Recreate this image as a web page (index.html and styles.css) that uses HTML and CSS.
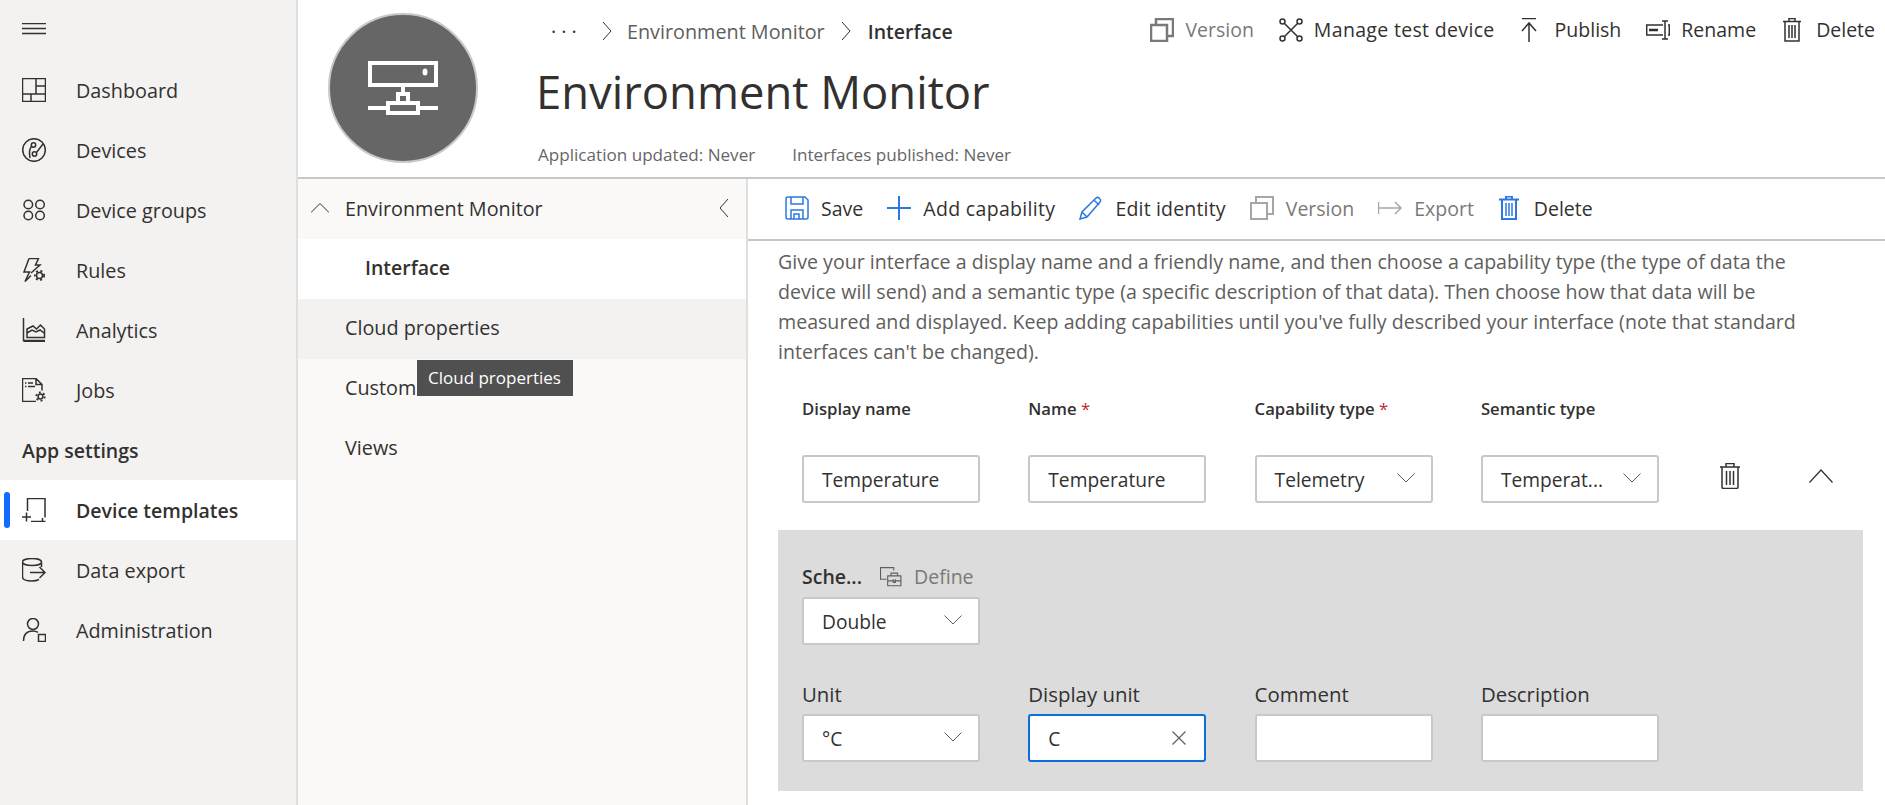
FILE: index.html
```html
<!DOCTYPE html>
<html lang="en">
<head>
  <meta charset="UTF-8">
  <title>Environment Monitor</title>
  <link rel="stylesheet" href="styles.css">
</head>
<body>
  <nav id="sidebar">
    <div class="burger">
      <svg width="24" height="12" viewBox="0 0 24 12"><path d="M0 .5h24M0 5.5h24M0 10.5h24"/></svg>
    </div>
    <a class="nav-item">
      <svg class="icon" viewBox="0 0 24 24"><path d="M.5.5h23v23H.5zM14 .5V16M.5 16h23M14 8h9.5M9 16v7.5"/></svg>
      Dashboard
    </a>
    <a class="nav-item">
      <svg class="icon" viewBox="0 0 24 24"><circle cx="12" cy="12" r="11.3"/><circle cx="11.5" cy="7" r="2.2"/><circle cx="12.5" cy="16" r="2.2"/><path d="M9.6 8.2C7.6 10.5 7 15 8 20M14.5 14.5L21 6"/></svg>
      Devices
    </a>
    <a class="nav-item">
      <svg class="icon" viewBox="0 0 24 24"><circle cx="6.3" cy="6.5" r="4.3"/><circle cx="18" cy="6.5" r="4.3"/><circle cx="6.3" cy="17.5" r="4.3"/><circle cx="18" cy="17.5" r="4.3"/></svg>
      Device groups
    </a>
    <a class="nav-item">
      <svg class="icon" viewBox="0 0 24 24"><path d="M7 .5h9.5l-3 6.5h4.5L9 15M7 .5L2 14h5.5L3 23.5l6-6"/><circle cx="17.5" cy="17.5" r="3"/><circle class="teeth" cx="17.5" cy="17.5" r="4.6"/></svg>
      Rules
    </a>
    <a class="nav-item">
      <svg class="icon" viewBox="0 0 24 24"><path d="M1.5 0v22.5H23M1.5 23.5H23M5 19.5V11l6-3 3.5 3 4-4 4 4v8.5zM5 15l5-3 4 2 4-2 4 3"/></svg>
      Analytics
    </a>
    <a class="nav-item">
      <svg class="icon" viewBox="0 0 24 24"><path d="M14 23.5H.5V.5H14l6 6v6M14 .5v6h6M3 5h1.5M3 8.5h1.5M6 5h5M6 8.5h7"/><circle cx="18.5" cy="18.5" r="2.4"/><circle class="teeth" cx="18.5" cy="18.5" r="4.2"/></svg>
      Jobs
    </a>
    <div class="nav-heading">App settings</div>
    <a class="nav-item nav-current">
      <svg class="icon" viewBox="0 0 24 24"><path d="M5.5 13V.5H23v19M0 19h9M4.5 14.5v9M9 23.5h14.5M20.5 20v3.5"/></svg>
      Device templates
    </a>
    <a class="nav-item">
      <svg class="icon" viewBox="0 0 24 24"><path d="M.5 4c0-2 4-3.5 9.5-3.5s9.5 1.5 9.5 3.5-4 3.5-9.5 3.5S.5 6 .5 4zM.5 4v15c0 3 4 4 9.5 4 3 0 5-.5 7-1.5M19.5 4v5M8 14.5h15M17.5 9l5.5 5.5-5.5 5.5"/></svg>
      Data export
    </a>
    <a class="nav-item">
      <svg class="icon" viewBox="0 0 24 24"><circle cx="11" cy="6" r="5.5"/><path d="M1.5 23c0-6 3-10 9.5-10 2 0 3.5.4 5 1.400"/><rect x="16.5" y="16.5" width="7" height="7"/></svg>
      Administration
    </a>
  </nav>

  <div id="main">
    <header id="header">
      <div class="avatar">
        <svg width="70" height="54" viewBox="0 0 70 54"><path d="M2 2h66v22H2zM35 24v9M30 33h10v9H30zM20 42h30v10H20zM0 47h20M50 47h20"/><ellipse cx="57" cy="11" rx="2.5" ry="3.5"/></svg>
      </div>
      <div class="head-text">
        <div class="crumbs">
          <span class="dots">···</span>
          <svg class="chev" viewBox="0 0 10 20"><path d="M1 1l8 9-8 9"/></svg>
          <span class="crumb">Environment Monitor</span>
          <svg class="chev" viewBox="0 0 10 20"><path d="M1 1l8 9-8 9"/></svg>
          <span class="crumb-now">Interface</span>
        </div>
        <h1>Environment Monitor</h1>
        <div class="meta">
          <span>Application updated: Never</span>
          <span>Interfaces published: Never</span>
        </div>
      </div>
      <div class="head-actions">
        <a class="act act-off">
          <svg class="icon" viewBox="0 0 24 24"><path class="thick" d="M1 7h16v16H1zM6 7V1h17v17h-6"/></svg>
          Version
        </a>
        <a class="act">
          <svg class="icon" viewBox="0 0 24 24"><circle cx="3.5" cy="3.5" r="2.5"/><circle cx="20.5" cy="3.5" r="2.5"/><circle cx="3.5" cy="20.5" r="2.5"/><circle cx="20.5" cy="20.5" r="2.5"/><path d="M5.500 5.500l13 13M18.500 5.500l-13 13"/></svg>
          <span class="stretch">Manage test device</span>
        </a>
        <a class="act act-publish">
          <svg class="icon icon-slim" viewBox="0 0 18 24"><path d="M2 .5h14M9 24V5M2 13l7-8 7 8"/></svg>
          Publish
        </a>
        <a class="act">
          <svg class="icon" viewBox="0 0 24 24"><path d="M17 7H.7v10H17M22 7h1.3v10H22M19 3v18M16 3h6M16 21h6"/><path class="thick" d="M3 12h9"/></svg>
          Rename
        </a>
        <a class="act act-last">
          <svg class="icon icon-slim" viewBox="0 0 18 24"><path d="M0 3.5h18M2 3.5V23h14V3.5M6 3.5V.5h6v3M6 7v13M9 7v13M12 7v13"/></svg>
          Delete
        </a>
      </div>
    </header>

    <div id="body">
      <aside id="tree">
        <div class="tree-top">
          <svg class="tree-up" viewBox="0 0 18 10"><path d="M0 9.5l9-9 9 9"/></svg>
          <span class="tree-name">Environment Monitor</span>
          <svg class="tree-back" viewBox="0 0 10 20"><path d="M9 1l-8 9 8 9"/></svg>
        </div>
        <div class="tree-row tree-sub">Interface</div>
        <div class="tree-row tree-hover">Cloud properties</div>
        <div class="tree-row">Customize</div>
        <div class="tree-row">Views</div>
        <div class="tooltip">Cloud properties</div>
      </aside>

      <section id="editor">
        <div class="toolbar">
          <a class="act">
            <svg class="icon blue" viewBox="0 0 24 24"><path d="M3 1h17l3 3v17a2 2 0 01-2 2H3a2 2 0 01-2-2V3a2 2 0 012-2zM6 1v7h12V1M6 23v-9h12v9M9 23v-5h5v5"/></svg>
            Save
          </a>
          <a class="act">
            <svg class="icon blue" viewBox="0 0 24 24"><path class="thick" d="M12 0v24M0 12h24"/></svg>
            <span class="stretch">Add capability</span>
          </a>
          <a class="act">
            <svg class="icon blue" viewBox="0 0 24 24"><path d="M1 23l2-7L17 2c2-2 6 2 4 4L8 21zM3 16l5 5M15 4l5 5"/></svg>
            <span class="stretch-some">Edit identity</span>
          </a>
          <a class="act act-off">
            <svg class="icon grey" viewBox="0 0 24 24"><path class="thick" d="M1 7h16v16H1zM6 7V1h17v17h-6"/></svg>
            Version
          </a>
          <a class="act act-off">
            <svg class="icon grey" viewBox="0 0 24 24"><path d="M.5 6v12M1 12h22M17 6l6 6-6 6"/></svg>
            Export
          </a>
          <a class="act act-trash">
            <svg class="icon blue" viewBox="0 0 22 24"><path class="thick" d="M1 3.5h20M4 3.5V23h14V3.5M8 3.5V.5h6v3"/><path d="M8 7v13M11 7v13M14 7v13"/></svg>
            Delete
          </a>
        </div>

        <p class="intro">Give your interface a display name and a friendly name, and then choose a capability type (the type of data the<br>device will send) and a semantic type (a specific description of that data). Then choose how that data will be<br>measured and displayed. Keep adding capabilities until you've fully described your interface (note that standard<br>interfaces can't be changed).</p>

        <div class="cap-head">
          <div class="fields">
            <label class="small-label">Display name</label>
            <label class="small-label">Name <b>*</b></label>
            <label class="small-label">Capability type <b>*</b></label>
            <label class="small-label">Semantic type</label>
          </div>
          <div class="cap-row">
            <div class="fields">
              <div class="input">Temperature</div>
              <div class="input">Temperature</div>
              <div class="input">Telemetry<svg class="drop" viewBox="0 0 18 10"><path d="M.5.5L9 9l8.5-8.5"/></svg></div>
              <div class="input">Temperat...<svg class="drop" viewBox="0 0 18 10"><path d="M.5.5L9 9l8.5-8.5"/></svg></div>
            </div>
            <svg class="row-trash" viewBox="0 0 20 26"><path d="M0 4h20M2 4v20a1.5 1.5 0 001.5 1.5h13A1.5 1.5 0 0018 24V4M6 4V.5h8V4M6.5 8v14M10 8v14M13.5 8v14"/></svg>
            <svg class="row-up" viewBox="0 0 24 14"><path d="M.5 13.5L12 1l11.5 12.5"/></svg>
          </div>
        </div>

        <div class="panel">
          <div class="schema-head">
            <span class="schema-label">Sche...</span>
            <svg class="define-icon" viewBox="0 0 20 18"><path d="M6 11H.5V.5h12V3M7 8h12v9H7zM10 8V5.5h6V8M7 12.5h12M12 11v3h2v-3"/></svg>
            <span class="define">Define</span>
          </div>
          <div class="fields">
            <div class="input">Double<svg class="drop" viewBox="0 0 18 10"><path d="M.5.5L9 9l8.5-8.5"/></svg></div>
          </div>
          <div class="fields fields-labels">
            <label class="panel-label">Unit</label>
            <label class="panel-label">Display unit</label>
            <label class="panel-label">Comment</label>
            <label class="panel-label">Description</label>
          </div>
          <div class="fields">
            <div class="input">°C<svg class="drop" viewBox="0 0 18 10"><path d="M.5.5L9 9l8.5-8.5"/></svg></div>
            <div class="input input-focus">C<svg class="clear" viewBox="0 0 14 14"><path d="M.5.5l13 13M13.5.5l-13 13"/></svg></div>
            <div class="input"></div>
            <div class="input"></div>
          </div>
        </div>
      </section>
    </div>
  </div>
</body>
</html>
```

FILE: styles.css
```css
*{
  margin: 0;
  padding: 0;
  box-sizing: border-box;
}

body{
  display: flex;
  height: 805px;
  overflow: hidden;
  font-family: "Open Sans", "Noto Sans", sans-serif;
  font-size: 19.5px;
  color: #323130;
  background: #fff;
}

svg{
  fill: none;
  stroke: currentColor;
  stroke-width: 1.5;
  flex: none;
}

.icon{
  width: 24px;
  height: 24px;
}
.icon-slim{
  width: 18px;
}
.thick{
  stroke-width: 2.5;
}
.teeth{
  stroke-width: 1.8;
  stroke-dasharray: 2 2.4;
}
.blue{
  color: #2b78e4;
}
.grey{
  color: #a8a6a4;
}
.stretch{
  letter-spacing: .33px;
}
.stretch-some{
  letter-spacing: .17px;
}

/* left nav */
#sidebar{
  width: 298px;
  flex: none;
  background: #f3f2f1;
  border-right: 2px solid #e1dfdd;
  font-size: 19.8px;
}
.burger{
  height: 60px;
  padding: 23px 0 0 22px;
}
.burger svg{
  display: block;
}
.nav-item{
  display: flex;
  align-items: center;
  gap: 30px;
  height: 60px;
  padding-left: 22px;
  position: relative;
}
.nav-heading{
  display: flex;
  align-items: center;
  height: 60px;
  padding-left: 22px;
  font-weight: 600;
  font-size: 19.5px;
}
.nav-current{
  background: #fff;
  font-weight: 600;
  font-size: 19.5px;
}
.nav-current::before{
  content: '';
  position: absolute;
  left: 4px;
  top: 12px;
  width: 6px;
  height: 36px;
  border-radius: 3px;
  background: #0f6cff;
}

#main{
  flex: 1;
  min-width: 0;
  display: flex;
  flex-direction: column;
}

/* page header */
#header{
  display: flex;
  height: 179px;
  flex: none;
  border-bottom: 2px solid #c8c8c8;
  padding-left: 30px;
}
.avatar{
  width: 150px;
  height: 150px;
  margin-top: 13px;
  flex: none;
  display: flex;
  align-items: center;
  justify-content: center;
  color: #fff;
  background: #666;
  border: 2px solid #c8c8c8;
  border-radius: 50%;
}
.avatar svg{
  stroke-width: 4;
}
.avatar ellipse{
  fill: #fff;
  stroke: none;
}
.head-text{
  margin-left: 58px;
  flex: none;
}
.crumbs{
  display: flex;
  align-items: center;
  height: 62px;
  padding-left: 15px;
  font-size: 19.8px;
}
.dots{
  width: 51px;
  letter-spacing: 5px;
}
.chev{
  width: 10px;
  height: 20px;
  stroke-width: 1;
}
.crumb{
  margin: 0 16px 0 15px;
  color: #605e5c;
}
.crumb-now{
  margin-left: 17px;
  font-weight: 600;
  font-size: 19.5px;
}
h1{
  font-size: 45.4px;
  font-weight: 400;
  line-height: 58px;
}
.meta{
  display: flex;
  gap: 37px;
  margin-top: 23px;
  padding-left: 2px;
  font-size: 17.1px;
  color: #666;
}
.head-actions{
  display: flex;
  align-items: center;
  gap: 25px;
  height: 59px;
  margin-left: auto;
  margin-right: 10px;
  white-space: nowrap;
}
.act{
  display: flex;
  align-items: center;
  gap: 11px;
}
.act-publish{
  gap: 17px;
}
.act-last{
  gap: 15px;
  margin-left: 2px;
}
.act-off{
  color: #7a7978;
}

#body{
  flex: 1;
  min-height: 0;
  display: flex;
}

/* template tree */
#tree{
  width: 450px;
  flex: none;
  background: #faf9f8;
  border-right: 2px solid #e1dfdd;
  position: relative;
  font-size: 19.8px;
}
.tree-top{
  display: flex;
  align-items: center;
  height: 60px;
  padding: 0 0 2px 13px;
}
.tree-up{
  width: 18px;
  height: 10px;
  stroke-width: 1;
}
.tree-name{
  margin-left: 16px;
}
.tree-back{
  width: 10px;
  height: 20px;
  margin-left: auto;
  margin-right: 17px;
  stroke-width: 1;
}
.tree-row{
  display: flex;
  align-items: center;
  height: 60px;
  padding: 0 0 3px 47px;
}
.tree-sub{
  padding-left: 67px;
  background: #fff;
  font-weight: 600;
  font-size: 19.5px;
}
.tree-hover{
  background: #f3f2f1;
}
.tooltip{
  position: absolute;
  left: 119px;
  top: 181px;
  width: 156px;
  height: 36px;
  padding-left: 11px;
  line-height: 36px;
  font-size: 17px;
  white-space: nowrap;
  color: #fff;
  background: #505050;
}

/* capability editor */
#editor{
  flex: 1;
  min-width: 0;
  overflow: hidden;
}
.toolbar{
  display: flex;
  align-items: center;
  gap: 24px;
  height: 62px;
  padding: 0 0 2px 37px;
  border-bottom: 2px solid #c8c8c8;
}
.toolbar .act{
  gap: 12px;
}
.toolbar .thick{
  stroke-width: 2;
}
.toolbar .act-trash{
  gap: 14px;
}
.act-trash .icon{
  width: 22px;
}
.intro{
  padding: 6px 0 0 30px;
  line-height: 30px;
  color: #605e5c;
  white-space: nowrap;
  font-size: 19.6px;
}
.cap-head{
  padding: 30px 0 0 54px;
}
.fields{
  display: grid;
  grid-template-columns: repeat(4, 178px);
  column-gap: 48.3px;
}
.small-label{
  font-size: 16.7px;
  font-weight: 600;
  line-height: 24px;
}
.small-label b{
  color: #c4262e;
  font-weight: 400;
}
.cap-row{
  display: flex;
  align-items: center;
  margin-top: 34px;
  height: 48px;
}
.row-trash{
  width: 20px;
  height: 26px;
  margin-left: 61px;
  margin-bottom: 6px;
}
.row-up{
  width: 24px;
  height: 14px;
  margin-left: 69px;
  margin-bottom: 6px;
  stroke-width: 1.2;
}
.input{
  display: flex;
  align-items: center;
  justify-content: space-between;
  height: 48px;
  padding: 0 18px;
  font-size: 19.2px;
  background: #fff;
  border: 2px solid #c8c8c8;
  border-radius: 3px;
  white-space: nowrap;
}
.drop{
  width: 18px;
  height: 10px;
  stroke-width: 1;
  color: #605e5c;
  margin: -2px -2px 0 0;
}
.clear{
  width: 14px;
  height: 14px;
  stroke-width: 1.2;
  color: #605e5c;
}
.input-focus{
  border-color: #0f6cdb;
}
.panel{
  width: 1085px;
  height: 261px;
  margin: 27px 0 0 30px;
  padding: 28px 0 0 24px;
  background: #dcdcdc;
}
.panel-label{
  line-height: 30px;
  font-size: 20.4px;
}
.schema-label{
  font-weight: 600;
}
.schema-head{
  display: flex;
  align-items: center;
  height: 37px;
  margin-bottom: 2px;
}
.define-icon{
  width: 22px;
  height: 20px;
  margin-left: 18px;
  stroke-width: 1;
  color: #605e5c;
}
.define{
  margin-left: 12px;
  color: #7a7978;
}
.fields-labels{
  margin-top: 34px;
  height: 35px;
}
```
